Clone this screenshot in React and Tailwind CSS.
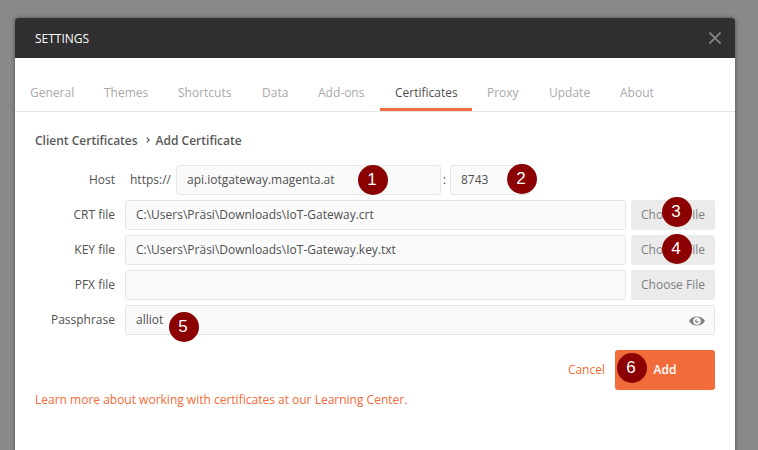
const TABS = [
  { label: 'General', width: 'w-[74px]' },
  { label: 'Themes', width: 'w-[74px]' },
  { label: 'Shortcuts', width: 'w-[84px]' },
  { label: 'Data', width: 'w-[56px]' },
  { label: 'Add-ons', width: 'w-[77px]' },
  { label: 'Certificates', width: 'w-[92px]', active: true },
  { label: 'Proxy', width: 'w-[62px]' },
  { label: 'Update', width: 'w-[71px]' },
  { label: 'About', width: 'w-[64px]' },
];

const FILES = [
  { label: 'CRT file', value: 'C:\\Users\\Präsi\\Downloads\\IoT-Gateway.crt', step: 3, pos: 'left-[30.5px] top-[-3.5px]' },
  { label: 'KEY file', value: 'C:\\Users\\Präsi\\Downloads\\IoT-Gateway.key.txt', step: 4, pos: 'left-[30.5px] top-[-1.5px]' },
  { label: 'PFX file', value: '' },
];

const FIELD = 'relative flex h-[30px] items-center rounded-[3px] border border-[#e6e6e6] bg-[#fafafa] px-[10px]';

function Step({ n, pos }) {
  return (
    <span
      className={`absolute z-10 flex h-[30px] w-[30px] items-center justify-center rounded-full bg-[#8b0000] pb-px pr-px font-['Liberation_Sans',sans-serif] text-[17px] font-normal leading-none text-white ${pos}`}
    >
      {n}
    </span>
  );
}

function Label({ children }) {
  return <div className="mr-[10px] w-20 shrink-0 text-right">{children}</div>;
}

export default function App() {
  return (
    <div className="h-[450px] w-[758px] overflow-hidden bg-[#898989] pl-[15px] pt-[18px] font-['Open_Sans',sans-serif] text-[12px] leading-[18px] text-[#505050]">
      <div className="h-[440px] w-[720px] rounded-t-[4px] bg-white shadow-[0_0_4px_rgba(0,0,0,0.45)]">
        <header className="flex h-10 items-center justify-between rounded-t-[3px] bg-[#303030] pl-5 pr-[14px] text-white">
          <h1 className="pt-[2px]">SETTINGS</h1>
          <svg width="12" height="12" viewBox="0 0 12 12" fill="none" stroke="#868686" strokeWidth="1.8">
            <path d="M.5.5l11 11M11.5.5l-11 11" />
          </svg>
        </header>

        <nav className="flex h-[54px] items-stretch border-b border-[#e6e6e6] pt-[13px]">
          {TABS.map((t) => (
            <div
              key={t.label}
              className={`flex shrink-0 items-start whitespace-nowrap border-b-[3px] pl-[15px] pt-[13px] ${t.width} ${
                t.active ? 'border-[#f26b3a] text-[#505050]' : 'border-transparent text-[#a9a9a9]'
              }`}
            >
              {t.label}
            </div>
          ))}
        </nav>

        <main className="pl-5 pr-5 pt-[20px]">
          <div className="flex h-[18px] items-center font-semibold text-[#585858]">
            <span>Client Certificates</span>
            <svg className="mb-[3px] ml-[8px] mr-[6px]" width="4" height="6" viewBox="0 0 4 6" fill="none" stroke="#505050" strokeWidth="1.1">
              <path d="M.7.6L3.2 3 .7 5.4" />
            </svg>
            <span>Add Certificate</span>
          </div>

          <div className="mt-[15px] flex flex-col gap-[5px]">
            <div className="flex h-[30px] items-center">
              <Label>Host</Label>
              <span className="w-[51px] pl-[5px]">https://</span>
              <div className={`${FIELD} w-[265px]`}>
                api.iotgateway.magenta.at
                <Step n={1} pos="left-[180.5px] top-[-1.5px]" />
              </div>
              <span className="w-[9px] pl-[2px]">:</span>
              <div className={`${FIELD} w-[80px]`}>
                8743
                <Step n={2} pos="left-[55.5px] top-[-2.5px]" />
              </div>
            </div>

            {FILES.map((f) => (
              <div key={f.label} className="flex h-[30px] items-center">
                <Label>{f.label}</Label>
                <div className={`${FIELD} w-[501px]`}>{f.value}</div>
                <button className="relative ml-[5px] h-[30px] w-[84px] rounded-[3px] bg-[#ebebeb] text-[#808080]">
                  Choose File
                  {f.step && <Step n={f.step} pos={f.pos} />}
                </button>
              </div>
            ))}

            <div className="flex h-[30px] items-center">
              <Label>Passphrase</Label>
              <div className={`${FIELD} w-[590px] justify-between`}>
                alliot
                <svg className="-mr-[1px] mt-px" width="16" height="10" viewBox="0 0 16 10">
                  <path fill="#808080" fillRule="evenodd" d="M0 5C1.8 1.8 4.6.4 8 .4S14.2 1.800 16 5C14.2 8.2 11.4 9.600 8 9.600S1.800 8.200 0 5zM8 1.200a3.800 3.800 0 1 0 0 7.600 3.800 3.800 0 0 0 0-7.600z" />
                  <path fill="#808080" d="M7.500 3.200v2.200h2.300A1.900 1.900 0 1 1 7.500 3.200z" />
                </svg>
                <Step n={5} pos="left-[42.500px] top-[5.500px]" />
              </div>
            </div>
          </div>

          <div className="mt-[15px] flex items-center justify-end">
            <span className="mr-[10px] text-[#f26b3a]">Cancel</span>
            <button className="relative h-10 w-[100px] rounded-[3px] bg-[#f26b3a] font-semibold text-white">
              Add
              <Step n={6} pos="left-[1.500px] top-[2.500px]" />
            </button>
          </div>
          <a className="mt-px block text-[#f26b3a]">Learn more about working with certificates at our Learning Center.</a>
        </main>
      </div>
    </div>
  );
}
